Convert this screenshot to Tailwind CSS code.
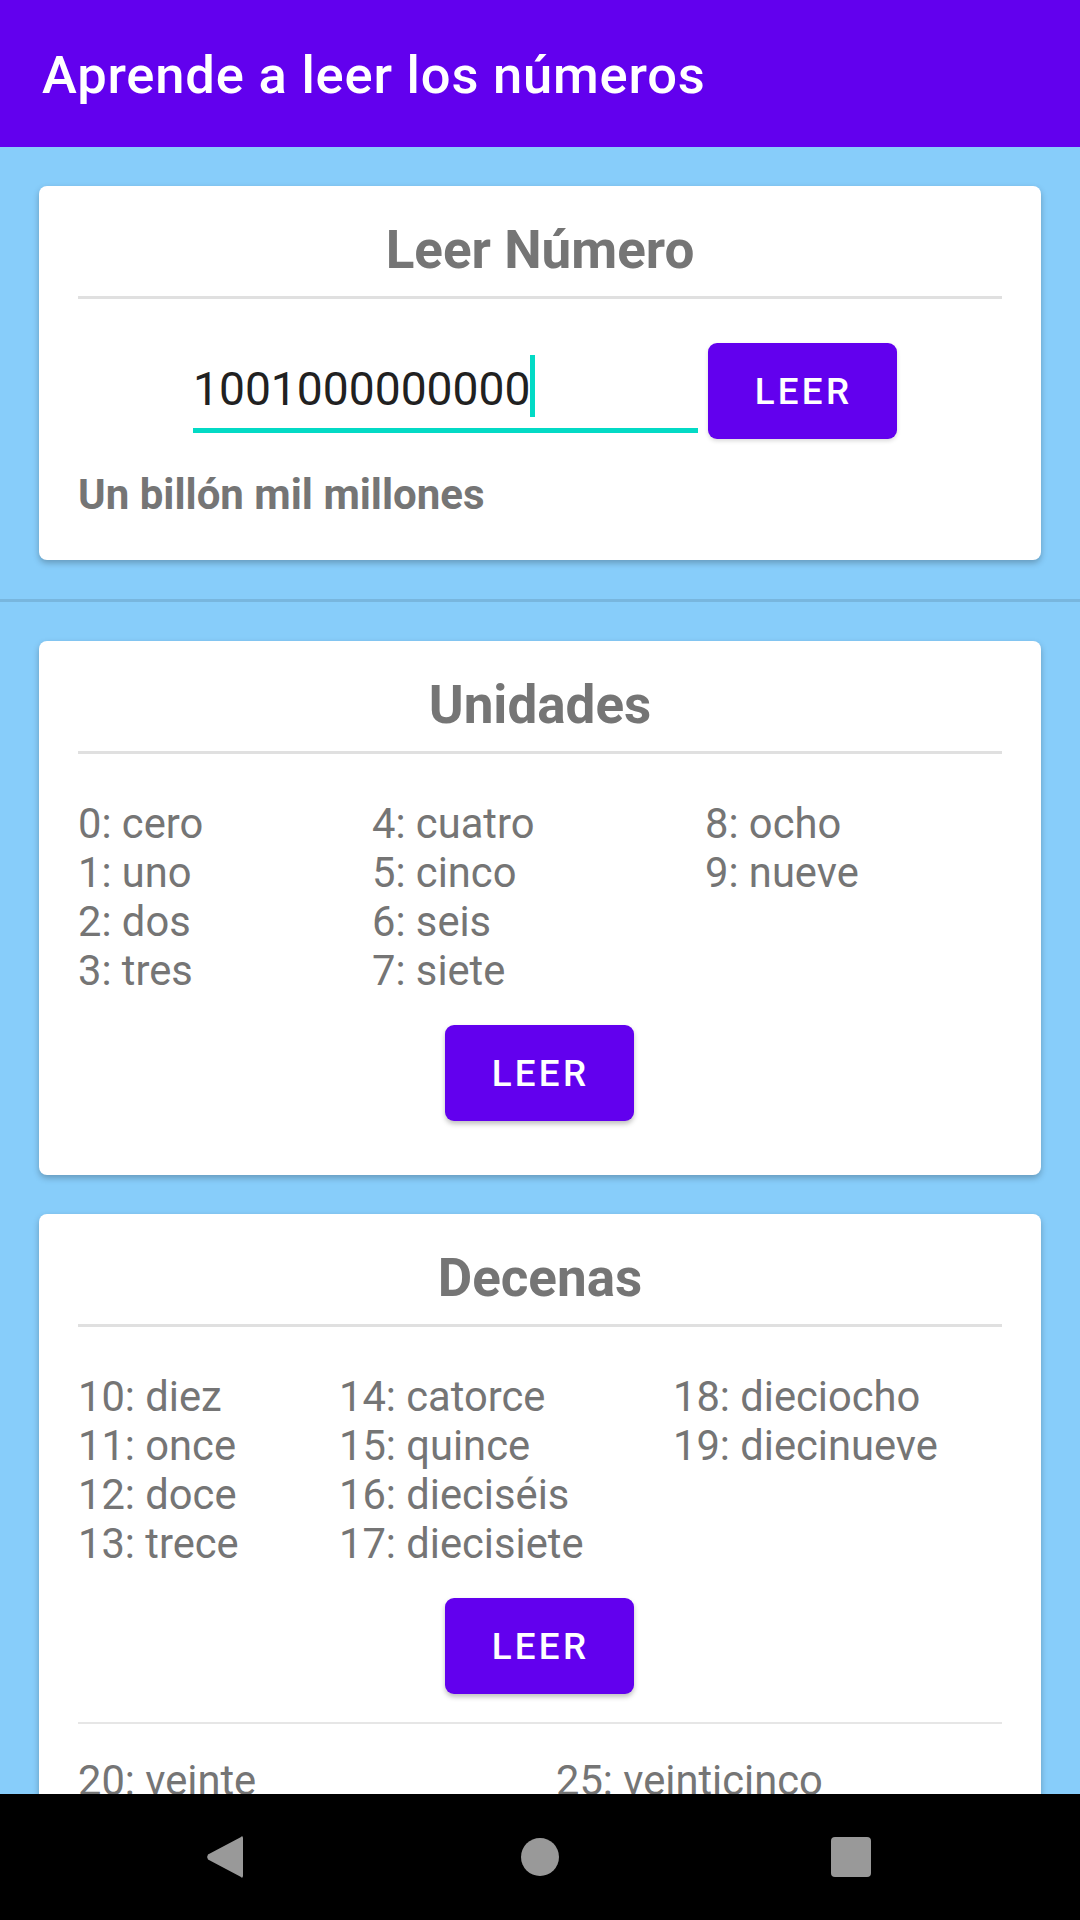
<!DOCTYPE html>
<html lang="es">
<head>
  <meta charset="UTF-8">
  <meta name="viewport" content="width=device-width, initial-scale=1.0">
  <title>Aprende a leer los números</title>
  <script src="https://cdn.jsdelivr.net/npm/@tailwindcss/browser@4"></script>
</head>
<body class="font-['Roboto',sans-serif]">
  <div class="w-[1080px] h-[1920px] flex flex-col overflow-hidden bg-[#87cdfa]">
    <header class="h-[147px] shrink-0 bg-[#6200ee] flex items-center pl-[42px] pt-[4px] z-10">
      <h1 class="text-[52.5px] leading-none font-medium tracking-[0.8px] text-white">Aprende a leer los números</h1>
    </header>

    <main class="flex-1 overflow-hidden">
      <section class="border-b-[3px] border-[#78b6de] pt-[39px] pb-[39px]">
        <div class="mx-[39px] h-[374px] bg-white rounded-[8px] shadow-[0_3px_6px_rgba(0,0,0,0.25)] px-[39px]">
          <h2 class="h-[113px] pt-[33px] border-b-[3px] border-[#e0e0e0] text-center text-[53px] leading-[62px] font-bold text-[#757575]">Leer Número</h2>
          <div class="flex items-start mt-[44px] pl-[115px]">
            <div class="relative w-[505px] h-[90px] border-b-[5px] border-[#03dac5]">
              <span class="block text-[46.2px] leading-[60px] pt-[16px] text-[#212121]">1001000000000</span>
              <span class="absolute left-[337px] top-[12px] w-[5px] h-[62px] bg-[#03dac5]"></span>
            </div>
            <button class="ml-[10px] w-[189px] h-[96px] pl-[2px] pt-[2px] bg-[#6200ee] rounded-[9px] shadow-[0_2px_4px_rgba(0,0,0,0.15)] text-white text-[36.75px] font-medium tracking-[3.3px]">LEER</button>
          </div>
          <p class="mt-[31px] text-[42px] leading-[50px] font-bold text-[#757575]">Un billón mil millones</p>
        </div>
      </section>

      <section class="pt-[39px] flex flex-col gap-[39px]">
        <div class="mx-[39px] h-[534px] bg-white rounded-[8px] shadow-[0_3px_6px_rgba(0,0,0,0.25)] px-[39px]">
          <h2 class="h-[113px] pt-[33px] border-b-[3px] border-[#e0e0e0] text-center text-[53px] leading-[62px] font-bold text-[#757575]">Unidades</h2>
          <div class="grid grid-cols-[294px_333px_1fr] mt-[45px] text-[41.7px] leading-[49px] text-[#757575]">
            <div><p>0: cero</p><p>1: uno</p><p>2: dos</p><p>3: tres</p></div>
            <div><p>4: cuatro</p><p>5: cinco</p><p>6: seis</p><p>7: siete</p></div>
            <div><p>8: ocho</p><p>9: nueve</p></div>
          </div>
          <div class="flex justify-center mt-[30px] pr-[1px]">
            <button class="w-[189px] h-[96px] pl-[2px] pt-[2px] bg-[#6200ee] rounded-[9px] shadow-[0_3px_5px_rgba(0,0,0,0.25)] text-white text-[36.75px] font-medium tracking-[3.3px]">LEER</button>
          </div>
        </div>

        <div class="mx-[39px] bg-white rounded-[8px] shadow-[0_3px_6px_rgba(0,0,0,0.25)] px-[39px] pb-[40px]">
          <h2 class="h-[113px] pt-[33px] border-b-[3px] border-[#e0e0e0] text-center text-[53px] leading-[62px] font-bold text-[#757575]">Decenas</h2>
          <div class="grid grid-cols-[261px_334px_1fr] mt-[45px] text-[41.7px] leading-[49px] text-[#757575]">
            <div><p>10: diez</p><p>11: once</p><p>12: doce</p><p>13: trece</p></div>
            <div><p>14: catorce</p><p>15: quince</p><p>16: dieciséis</p><p>17: diecisiete</p></div>
            <div><p>18: dieciocho</p><p>19: diecinueve</p></div>
          </div>
          <div class="flex justify-center mt-[30px] pr-[1px]">
            <button class="w-[189px] h-[96px] pl-[2px] pt-[2px] bg-[#6200ee] rounded-[9px] shadow-[0_3px_5px_rgba(0,0,0,0.25)] text-white text-[36.75px] font-medium tracking-[3.3px]">LEER</button>
          </div>
          <div class="border-t-[2px] border-[#e6e6e6] mt-[28px]"></div>
          <div class="grid grid-cols-[478px_1fr] mt-[32px] text-[41.7px] leading-[49px] text-[#757575]">
            <div><p>20: veinte</p></div>
            <div><p>25: veinticinco</p></div>
          </div>
        </div>
      </section>
    </main>

    <nav class="h-[126px] shrink-0 bg-black z-10 relative">
      <svg class="absolute left-[205px] top-[40px]" width="40" height="46" viewBox="0 0 40 46"><path d="M38 4.5 L38 41.5 Q38 45 35.6 42.8 L3 25.5 Q1.2 23 3 20.5 L35.6 3.2 Q38 1 38 4.5 Z" fill="#999999"/></svg>
      <span class="absolute left-[521px] top-[44px] w-[38px] h-[38px] rounded-full bg-[#999999]"></span>
      <span class="absolute left-[831px] top-[43px] w-[40px] h-[40px] rounded-[4px] bg-[#999999]"></span>
    </nav>
  </div>
</body>
</html>
